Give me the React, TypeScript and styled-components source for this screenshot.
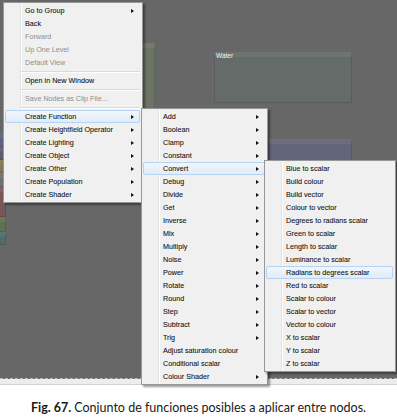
import { FC } from 'react'
import styled, { createGlobalStyle } from 'styled-components'

const GlobalStyle = createGlobalStyle`
	html, body {
		margin: 0;
		padding: 0;
		background: #ffffff;
	}
	body {
		width: 397px;
		height: 419px;
		overflow: hidden;
	}
`

interface MenuEntry {
	label?: string
	sub?: boolean
	disabled?: boolean
	active?: boolean
	separator?: boolean
}

const mainMenu: MenuEntry[] = [
	{ label: 'Go to Group', sub: true },
	{ label: 'Back' },
	{ label: 'Forward', disabled: true },
	{ label: 'Up One Level', disabled: true },
	{ label: 'Default View', disabled: true },
	{ separator: true },
	{ label: 'Open in New Window' },
	{ separator: true },
	{ label: 'Save Nodes as Clip File...', disabled: true },
	{ separator: true },
	{ label: 'Create Function', sub: true, active: true },
	{ label: 'Create Heightfield Operator', sub: true },
	{ label: 'Create Lighting', sub: true },
	{ label: 'Create Object', sub: true },
	{ label: 'Create Other', sub: true },
	{ label: 'Create Population', sub: true },
	{ label: 'Create Shader', sub: true },
]

const functionMenu: MenuEntry[] = [
	{ label: 'Add', sub: true },
	{ label: 'Boolean', sub: true },
	{ label: 'Clamp', sub: true },
	{ label: 'Constant', sub: true },
	{ label: 'Convert', sub: true, active: true },
	{ label: 'Debug', sub: true },
	{ label: 'Divide', sub: true },
	{ label: 'Get', sub: true },
	{ label: 'Inverse', sub: true },
	{ label: 'Mix', sub: true },
	{ label: 'Multiply', sub: true },
	{ label: 'Noise', sub: true },
	{ label: 'Power', sub: true },
	{ label: 'Rotate', sub: true },
	{ label: 'Round', sub: true },
	{ label: 'Step', sub: true },
	{ label: 'Subtract', sub: true },
	{ label: 'Trig', sub: true },
	{ label: 'Adjust saturation colour' },
	{ label: 'Conditional scalar' },
	{ label: 'Colour Shader', sub: true },
]

const convertMenu: MenuEntry[] = [
	{ label: 'Blue to scalar' },
	{ label: 'Build colour' },
	{ label: 'Build vector' },
	{ label: 'Colour to vector' },
	{ label: 'Degrees to radians scalar' },
	{ label: 'Green to scalar' },
	{ label: 'Length to scalar' },
	{ label: 'Luminance to scalar' },
	{ label: 'Radians to degrees scalar', active: true },
	{ label: 'Red to scalar' },
	{ label: 'Scalar to colour' },
	{ label: 'Scalar to vector' },
	{ label: 'Vector to colour' },
	{ label: 'X to scalar' },
	{ label: 'Y to scalar' },
	{ label: 'Z to scalar' },
]

// colored nodes peeking in from the left edge of the graph
const stripNodes = [
	{ top: 133, height: 14, color: '#5d6285' },
	{ top: 147, height: 13, color: '#5b5c6c' },
	{ top: 160, height: 13, color: '#7d7752' },
	{ top: 173, height: 14, color: '#707070' },
	{ top: 187, height: 30, color: '#7a5656' },
	{ top: 217, height: 15, color: '#5d7251' },
	{ top: 232, height: 13, color: '#4f6d69' },
]

const Page = styled.div`
	width: 397px;
	height: 419px;
	display: flex;
	flex-direction: column;
	font-family: 'Liberation Sans', Arial, sans-serif;
`

const Canvas = styled.div`
	position: relative;
	height: 378px;
	flex-shrink: 0;
	background: #676767;
	border-bottom: 1px dashed #b9b9b9;
`

const WindowEdge = styled.div`
	height: 5px;
	flex-shrink: 0;
	background: #ededed;
	border-bottom: 1px solid #d2d2d2;
`

const Caption = styled.p`
	flex: 1;
	margin: 0;
	display: flex;
	align-items: center;
	justify-content: center;
	padding-top: 11px;
	font-family: Lato, 'Open Sans', sans-serif;
	font-size: 12.5px;
	color: #1a1a1a;

	b {
		font-weight: 700;
		margin-right: 3px;
	}
`

const Node = styled.div<{ $left: number; $top: number; $width: number; $height: number; $color: string }>`
	position: absolute;
	left: ${({ $left }) => $left}px;
	top: ${({ $top }) => $top}px;
	width: ${({ $width }) => $width}px;
	height: ${({ $height }) => $height}px;
	box-sizing: border-box;
	background: ${({ $color }) => $color};
	border: 1px solid rgba(0, 0, 0, 0.12);
	border-top: 5px solid rgba(255, 255, 255, 0.06);
`

const NodeLabel = styled.span`
	position: absolute;
	left: 1px;
	top: -5px;
	font-family: 'Liberation Sans', Arial, sans-serif;
	font-size: 6.5px;
	color: #f4f4f4;
`

const Menu = styled.div<{ $left: number; $top: number; $width: number; $z: number }>`
	position: absolute;
	left: ${({ $left }) => $left}px;
	top: ${({ $top }) => $top}px;
	width: ${({ $width }) => $width}px;
	z-index: ${({ $z }) => $z};
	box-sizing: border-box;
	padding: 1px 0;
	border: 1px solid #979797;
	background: linear-gradient(
		to right,
		#f0f0f0 0,
		#f0f0f0 16px,
		#e2e3e3 16px,
		#e2e3e3 17px,
		#ffffff 17px,
		#ffffff 18px,
		#f0f0f0 18px
	);
	box-shadow: 2px 2px 2px rgba(0, 0, 0, 0.4);
`

const Item = styled.div<{ $disabled?: boolean; $active?: boolean }>`
	height: 13px;
	margin: 0 2px 0 1px;
	padding: 0 5px 0 19px;
	box-sizing: border-box;
	display: flex;
	align-items: center;
	justify-content: space-between;
	font-size: 7.2px;
	white-space: nowrap;
	color: ${({ $disabled }) => ($disabled ? '#8e8e8e' : '#111111')};
	border: 1px solid ${({ $active }) => ($active ? '#b6d3f1' : 'transparent')};
	border-radius: 2px;
	background: ${({ $active }) => ($active ? 'linear-gradient(#f1f6fc, #e0ecf9)' : 'transparent')};
	-webkit-text-stroke: ${({ $disabled }) => ($disabled ? '0' : '0.08px #111111')};
`

const Arrow = styled.span`
	width: 0;
	height: 0;
	border-left: 3px solid #111;
	border-top: 2.5px solid transparent;
	border-bottom: 2.5px solid transparent;
`

const Separator = styled.div`
	height: 0;
	margin: 2px 2px 1px 17px;
	border-top: 1px solid #dadada;
	border-bottom: 1px solid #ffffff;
`

const ContextMenu: FC<{ items: MenuEntry[]; left: number; top: number; width: number; z: number }> = ({
	items,
	left,
	top,
	width,
	z,
}) => (
	<Menu $left={left} $top={top} $width={width} $z={z}>
		{items.map((item, i) =>
			item.separator ? (
				<Separator key={i} />
			) : (
				<Item key={i} $disabled={item.disabled} $active={item.active}>
					<span>{item.label}</span>
					{item.sub && <Arrow />}
				</Item>
			)
		)}
	</Menu>
)

export default function App() {
	return (
		<>
			<GlobalStyle />
			<Page>
				<Canvas>
					<Node $left={60} $top={43} $width={95} $height={90} $color="#6b7466" />
					<Node $left={214} $top={52} $width={138} $height={51} $color="#646b68">
						<NodeLabel>Water</NodeLabel>
					</Node>
					<Node $left={268} $top={139} $width={84} $height={40} $color="#636578" />
					{stripNodes.map((n, i) => (
						<Node key={i} $left={-40} $top={n.top} $width={46} $height={n.height} $color={n.color} />
					))}
					<ContextMenu items={mainMenu} left={3} top={2} width={140} z={2} />
					<ContextMenu items={functionMenu} left={141} top={108} width={127} z={3} />
					<ContextMenu items={convertMenu} left={264} top={160} width={132} z={4} />
				</Canvas>
				<WindowEdge />
				<Caption>
					<b>Fig. 67.</b> Conjunto de funciones posibles a aplicar entre nodos.
				</Caption>
			</Page>
		</>
	)
}
